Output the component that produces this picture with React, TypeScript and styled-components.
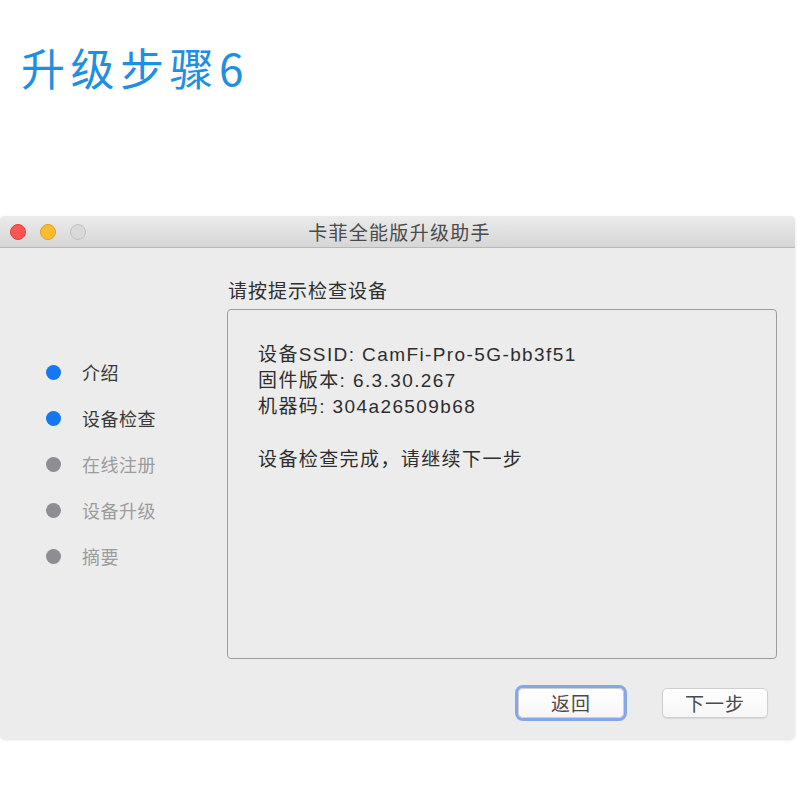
import styled, { createGlobalStyle } from 'styled-components';

const GlobalStyle = createGlobalStyle`
    html, body {
        margin: 0;
        padding: 0;
        background: #ffffff;
    }
    body {
        font-family: 'Liberation Sans', 'Noto Sans CJK SC', sans-serif;
    }
`;

interface Step {
    label: string;
    done: boolean;
}

const steps: Step[] = [
    { label: '介绍', done: true },
    { label: '设备检查', done: true },
    { label: '在线注册', done: false },
    { label: '设备升级', done: false },
    { label: '摘要', done: false },
];

const infoLines = [
    '设备SSID: CamFi-Pro-5G-bb3f51',
    '固件版本: 6.3.30.267',
    '机器码: 304a26509b68',
];

const App = () => {
    return (
        <Page>
            <GlobalStyle />
            <PageTitle>升级步骤6</PageTitle>
            <Window>
                <TitleBar>
                    <Lights>
                        <Light $color='#fc5753' $border='#df3d39' />
                        <Light $color='#fdbc2e' $border='#dea024' />
                        <Light $color='#d9d9d9' $border='#c2c2c2' />
                    </Lights>
                    <WindowTitle>卡菲全能版升级助手</WindowTitle>
                </TitleBar>
                <Body>
                    <Sidebar>
                        {steps.map((step) => (
                            <StepItem key={step.label}>
                                <Dot $done={step.done} />
                                <StepLabel $done={step.done}>
                                    {step.label}
                                </StepLabel>
                            </StepItem>
                        ))}
                    </Sidebar>
                    <Main>
                        <Heading>请按提示检查设备</Heading>
                        <Panel>
                            {infoLines.map((line) => (
                                <Line key={line}>{line}</Line>
                            ))}
                            <Spacer />
                            <Line>设备检查完成，请继续下一步</Line>
                        </Panel>
                        <Footer>
                            <Button $focused>返回</Button>
                            <Button>下一步</Button>
                        </Footer>
                    </Main>
                </Body>
            </Window>
        </Page>
    );
};

const Page = styled.div`
    width: 800px;
    height: 800px;
    background: #ffffff;
    overflow: hidden;
`;

const PageTitle = styled.div`
    padding: 38px 0 0 21px;
    height: 175px;
    box-sizing: border-box;
    font-family: 'Noto Sans CJK SC', sans-serif;
    font-size: 44px;
    line-height: 58px;
    color: #1e8fe1;
    letter-spacing: 5.5px;
`;

const Window = styled.div`
    margin-top: 41px;
    width: 795px;
    height: 523px;
    background: #ececec;
    border-radius: 5px;
    box-shadow: 0 1px 3px rgba(0, 0, 0, 0.12);
    display: flex;
    flex-direction: column;
    overflow: hidden;
`;

const TitleBar = styled.div`
    position: relative;
    height: 31px;
    flex-shrink: 0;
    background: linear-gradient(#ebebeb, #d6d6d6);
    border-bottom: 1px solid #b8b8b8;
    display: flex;
    align-items: center;
    justify-content: center;
`;

const Lights = styled.div`
    position: absolute;
    left: 10px;
    top: 8px;
    display: flex;
    gap: 14px;
`;

const Light = styled.div<{ $color: string; $border: string }>`
    width: 16px;
    height: 16px;
    border-radius: 50%;
    background: ${(props) => props.$color};
    border: 1px solid ${(props) => props.$border};
    box-sizing: border-box;
`;

const WindowTitle = styled.div`
    font-family: 'Noto Sans CJK SC', sans-serif;
    font-size: 19px;
    letter-spacing: 1.3px;
    color: #4a4a4a;
    padding-left: 4px;
`;

const Body = styled.div`
    flex: 1;
    display: flex;
`;

const Sidebar = styled.div`
    width: 227px;
    flex-shrink: 0;
    padding: 101px 0 0 46px;
    box-sizing: border-box;
    display: flex;
    flex-direction: column;
`;

const StepItem = styled.div`
    height: 46px;
    display: flex;
    align-items: center;
    gap: 21px;
`;

const Dot = styled.div<{ $done: boolean }>`
    width: 15px;
    height: 15px;
    border-radius: 50%;
    background: ${(props) => (props.$done ? '#1677f2' : '#8d8d93')};
`;

const StepLabel = styled.div<{ $done: boolean }>`
    font-family: 'Noto Sans CJK SC', sans-serif;
    font-size: 18px;
    letter-spacing: 0.5px;
    color: ${(props) => (props.$done ? '#3a3a3a' : '#9c9c9c')};
`;

const Main = styled.div`
    flex: 1;
    padding: 29px 18px 0 0;
    display: flex;
    flex-direction: column;
`;

const Heading = styled.div`
    font-family: 'Noto Sans CJK SC', sans-serif;
    font-size: 19px;
    letter-spacing: 1px;
    line-height: 26px;
    color: #2e2e2e;
    padding-left: 1px;
    margin-bottom: 6px;
`;

const Panel = styled.div`
    height: 350px;
    box-sizing: border-box;
    border: 1.5px solid #9d9d9d;
    border-radius: 4px;
    background: #ececec;
    padding: 32px 0 0 30px;
`;

const Line = styled.div`
    font-size: 19px;
    letter-spacing: 1.4px;
    line-height: 26px;
    color: #2e2e2e;
`;

const Spacer = styled.div`
    height: 27px;
`;

const Footer = styled.div`
    display: flex;
    justify-content: flex-end;
    gap: 38px;
    padding: 29px 9px 0 0;
`;

const Button = styled.button<{ $focused?: boolean }>`
    width: 106px;
    height: 30px;
    font-family: 'Noto Sans CJK SC', sans-serif;
    font-size: 19px;
    letter-spacing: 1px;
    line-height: 28px;
    color: #4a4a4a;
    background: linear-gradient(#ffffff, #f6f6f6);
    border: 1px solid #cfcfcf;
    border-radius: 5px;
    padding: 0;
    box-shadow: ${(props) =>
        props.$focused ? '0 0 0 3px #84a8e6' : '0 1px 1px rgba(0,0,0,0.08)'};
`;

export default App;
